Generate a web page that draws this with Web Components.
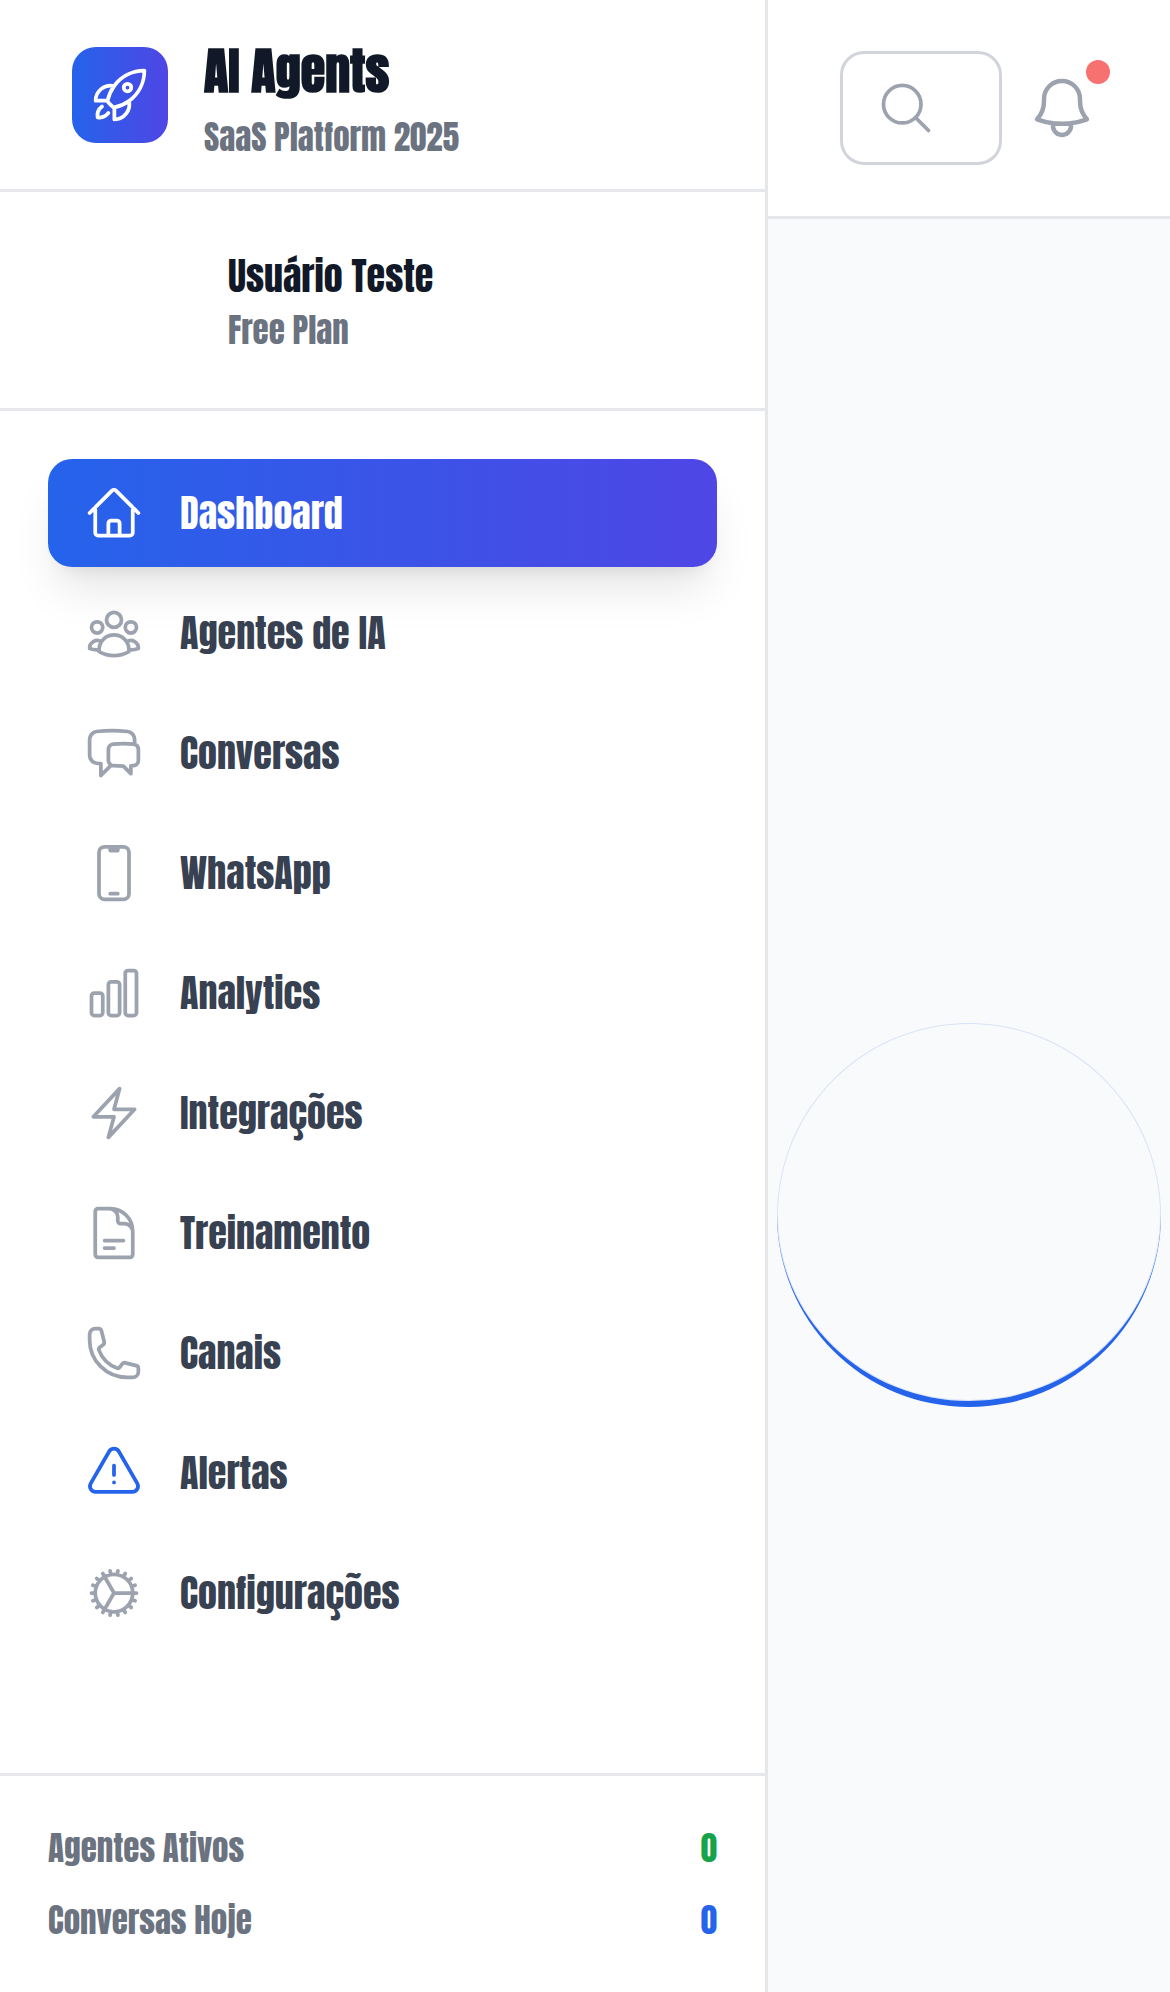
<!DOCTYPE html>
<html lang="pt-BR">
<head>
<meta charset="utf-8">
<meta name="viewport" content="width=device-width, initial-scale=1">
<title>AI Agents</title>
<style>
  body {
    margin: 0;
    background: #f9fafb;
    color: #111827;
    font-family: Anton, "Open Sans Condensed", Roboto, sans-serif;
    font-weight: 500;
    --line: #e5e7eb;
    --muted: #6b7280;
    --icon: #9ca3af;
    --blue: #2563eb;
    --brand: linear-gradient(to right, #2563eb, #4f46e5);
    --label: 38px;
    --small: 33px;
  }
</style>
</head>
<body>
<app-shell>
  <app-sidebar slot="sidebar">
    <app-brand slot="brand" name="AI Agents" tagline="SaaS Platform 2025"></app-brand>
    <user-card slot="user" name="Usuário Teste" plan="Free Plan"></user-card>
    <nav-item icon="home" active>Dashboard</nav-item>
    <nav-item icon="group">Agentes de IA</nav-item>
    <nav-item icon="chat">Conversas</nav-item>
    <nav-item icon="mobile">WhatsApp</nav-item>
    <nav-item icon="chart">Analytics</nav-item>
    <nav-item icon="bolt">Integrações</nav-item>
    <nav-item icon="document">Treinamento</nav-item>
    <nav-item icon="phone">Canais</nav-item>
    <nav-item icon="alert" style="--icon: var(--blue)">Alertas</nav-item>
    <nav-item icon="cog">Configurações</nav-item>
    <stat-row slot="stats" value="0" style="--value: #16a34a">Agentes Ativos</stat-row>
    <stat-row slot="stats" value="0" style="--value: var(--blue)">Conversas Hoje</stat-row>
  </app-sidebar>
  <app-topbar slot="topbar"></app-topbar>
  <loading-spinner></loading-spinner>
</app-shell>

<script>
const ICONS = {
  rocket: 'M15.59 14.37a6 6 0 01-5.84 7.38v-4.8m5.84-2.58a14.98 14.98 0 006.16-12.12A14.98 14.98 0 009.631 8.41m5.96 5.96a14.926 14.926 0 01-5.841 2.58m-.119-8.54a6 6 0 00-7.381 5.84h4.8m2.581-5.84a14.927 14.927 0 00-2.58 5.84m2.699 2.7c-.103.021-.207.041-.311.06a15.09 15.09 0 01-2.448-2.448 14.9 14.9 0 01.06-.312m-2.24 2.39a4.493 4.493 0 00-1.757 4.306 4.493 4.493 0 004.306-1.758M16.5 9a1.5 1.5 0 11-3 0 1.5 1.5 0 013 0z',
  home: 'M2.25 12l8.954-8.955c.44-.439 1.152-.439 1.591 0L21.75 12M4.5 9.75v10.125c0 .621.504 1.125 1.125 1.125H9.75v-4.875c0-.621.504-1.125 1.125-1.125h2.25c.621 0 1.125.504 1.125 1.125V21h4.125c.621 0 1.125-.504 1.125-1.125V9.75M8.25 21h8.25',
  group: 'M18 18.72a9.094 9.094 0 003.741-.479 3 3 0 00-4.682-2.72m.94 3.198l.001.031c0 .225-.012.447-.037.666A11.944 11.944 0 0112 21c-2.17 0-4.207-.576-5.963-1.584A6.062 6.062 0 016 18.719m12 0a5.971 5.971 0 00-.941-3.197m0 0A5.995 5.995 0 0012 12.75a5.995 5.995 0 00-5.058 2.772m0 0a3 3 0 00-4.681 2.72 8.986 8.986 0 003.74.477m.94-3.197a5.971 5.971 0 00-.94 3.197M15 6.75a3 3 0 11-6 0 3 3 0 016 0zm6 3a2.25 2.25 0 11-4.5 0 2.25 2.25 0 014.5 0zm-13.5 0a2.25 2.25 0 11-4.5 0 2.25 2.25 0 014.5 0z',
  chat: 'M20.25 8.511c.884.284 1.5 1.128 1.5 2.097v4.286c0 1.136-.847 2.1-1.98 2.193-.34.027-.68.052-1.02.072v3.091l-3-3c-1.354 0-2.694-.055-4.02-.163a2.115 2.115 0 01-.825-.242m9.345-8.334a2.126 2.126 0 00-.476-.095 48.64 48.64 0 00-8.048 0c-1.131.094-1.976 1.057-1.976 2.192v4.286c0 .837.46 1.58 1.155 1.951m9.345-8.334V6.637c0-1.621-1.152-3.026-2.76-3.235A48.455 48.455 0 0011.25 3c-2.115 0-4.198.137-6.24.402-1.608.209-2.76 1.614-2.76 3.235v6.226c0 1.621 1.152 3.026 2.76 3.235.577.075 1.157.14 1.74.194V21l4.155-4.155',
  mobile: 'M10.5 1.5H8.25A2.25 2.25 0 006 3.75v16.5a2.25 2.25 0 002.25 2.25h7.5A2.25 2.25 0 0018 20.25V3.75a2.25 2.25 0 00-2.25-2.25H13.5m-3 0V3h3V1.5m-3 0h3m-3 18.75h3',
  chart: 'M3 13.125C3 12.504 3.504 12 4.125 12h2.25c.621 0 1.125.504 1.125 1.125v6.75C7.5 20.496 6.996 21 6.375 21h-2.25A1.125 1.125 0 013 19.875v-6.75zM9.75 8.625c0-.621.504-1.125 1.125-1.125h2.25c.621 0 1.125.504 1.125 1.125v11.25c0 .621-.504 1.125-1.125 1.125h-2.25a1.125 1.125 0 01-1.125-1.125V8.625zM16.5 4.125c0-.621.504-1.125 1.125-1.125h2.25C20.496 3 21 3.504 21 4.125v15.75c0 .621-.504 1.125-1.125 1.125h-2.25a1.125 1.125 0 01-1.125-1.125V4.125z',
  bolt: 'M3.75 13.5l10.5-11.25L12 10.5h8.25L9.75 21.75 12 13.5H3.75z',
  document: 'M19.5 14.25v-2.625a3.375 3.375 0 00-3.375-3.375h-1.5A1.125 1.125 0 0113.5 7.125v-1.5a3.375 3.375 0 00-3.375-3.375H8.25m0 12.75h7.5m-7.5 3H12M10.5 2.25H5.625c-.621 0-1.125.504-1.125 1.125v17.25c0 .621.504 1.125 1.125 1.125h12.75c.621 0 1.125-.504 1.125-1.125V11.25a9 9 0 00-9-9z',
  phone: 'M2.25 6.75c0 8.284 6.716 15 15 15h2.25a2.25 2.25 0 002.25-2.25v-1.372c0-.516-.351-.966-.852-1.091l-4.423-1.106c-.44-.11-.902.055-1.173.417l-.97 1.293c-.282.376-.769.542-1.21.38a12.035 12.035 0 01-7.143-7.143c-.162-.441.004-.928.38-1.21l1.293-.97c.363-.271.527-.734.417-1.173L6.963 3.102a1.125 1.125 0 00-1.091-.852H4.5A2.25 2.25 0 002.25 4.5v2.25z',
  alert: 'M12 9v3.75m-9.303 3.376c-.866 1.5.217 3.374 1.948 3.374h14.71c1.73 0 2.813-1.874 1.948-3.374L13.949 3.378c-.866-1.5-3.032-1.5-3.898 0L2.697 16.126zM12 15.75h.007v.008H12v-.008z',
  cog: 'M4.5 12a7.5 7.5 0 0015 0m-15 0a7.5 7.5 0 1115 0m-15 0H3m16.5 0H21m-1.5 0H12m-8.457 3.077l1.41-.513m14.095-5.13l1.41-.513M5.106 17.785l1.15-.964m11.49-9.642l1.149-.964M7.501 19.795l.75-1.3m7.5-12.99l.75-1.3m-6.063 16.658l.26-1.477m2.605-14.772l.26-1.477m0 17.726l-.26-1.477M10.698 4.614l-.26-1.477M16.5 19.794l-.75-1.299M7.5 4.205L12 12m6.894 5.785l-1.149-.964M6.256 7.178l-1.15-.964m15.352 8.864l-1.41-.513M4.954 9.435l-1.41-.514M12.002 12l-3.75 6.495',
  search: 'M21 21l-5.197-5.197m0 0A7.5 7.5 0 105.196 5.196a7.5 7.5 0 0010.607 10.607z',
  bell: 'M14.857 17.082a23.848 23.848 0 005.454-1.31A8.967 8.967 0 0118 9.75v-.7V9A6 6 0 006 9v.75a8.967 8.967 0 01-2.312 6.022c1.733.64 3.56 1.085 5.455 1.31m5.714 0a24.255 24.255 0 01-5.714 0m5.714 0a3 3 0 11-5.714 0'
};

/* Registers an element whose shadow root is filled from the given markup. */
function element(tag, render) {
  customElements.define(tag, class extends HTMLElement {
    connectedCallback() {
      if (this.shadowRoot) return;
      this.attachShadow({ mode: 'open' }).innerHTML =
        '<style>*{box-sizing:border-box}:host{box-sizing:border-box}</style>' + render(this);
    }
  });
}

element('ui-icon', el => `
  <style>
    :host { display: block; flex: none; width: 60px; height: 60px; }
    svg { display: block; width: 100%; height: 100%; }
  </style>
  <svg viewBox="0 0 24 24" fill="none" stroke="currentColor" stroke-width="1.5"
       stroke-linecap="round" stroke-linejoin="round" aria-hidden="true">
    <path d="${ICONS[el.getAttribute('name')]}"/>
  </svg>`);

element('app-shell', () => `
  <style>
    :host { display: flex; height: 100vh; overflow: hidden; }
    .page { flex: 1; min-width: 0; display: flex; flex-direction: column; }
    main { flex: 1; min-height: 0; overflow: hidden; }
  </style>
  <slot name="sidebar"></slot>
  <div class="page">
    <slot name="topbar"></slot>
    <main><slot></slot></main>
  </div>`);

element('app-sidebar', () => `
  <style>
    :host {
      display: flex; flex-direction: column; flex: none; width: 768px;
      background: #fff; border-right: 3px solid var(--line);
    }
    nav { flex: 1; display: flex; flex-direction: column; gap: 12px; padding: 48px; }
    footer {
      display: flex; flex-direction: column; gap: 24px; padding: 48px;
      border-top: 3px solid var(--line);
    }
  </style>
  <slot name="brand"></slot>
  <slot name="user"></slot>
  <nav><slot></slot></nav>
  <footer><slot name="stats"></slot></footer>`);

element('app-brand', el => `
  <style>
    :host {
      display: flex; align-items: center; gap: 36px; height: 192px; padding: 0 72px;
      border-bottom: 3px solid var(--line);
    }
    .logo {
      display: grid; place-items: center; width: 96px; height: 96px;
      border-radius: 24px; background: var(--brand); color: #fff;
    }
    h1, p { margin: 0; }
    h1 { font-size: 50px; line-height: 84px; font-weight: 700; }
    p { font-size: var(--small); line-height: 48px; color: var(--muted); }
  </style>
  <div class="logo"><ui-icon name="rocket"></ui-icon></div>
  <div>
    <h1>${el.getAttribute('name')}</h1>
    <p>${el.getAttribute('tagline')}</p>
  </div>`);

element('user-card', el => `
  <style>
    :host {
      display: flex; align-items: center; gap: 36px; padding: 48px 72px;
      border-bottom: 3px solid var(--line);
    }
    .avatar { width: 120px; height: 120px; border-radius: 50%; }
    p { margin: 0; }
    .name { font-size: var(--label); line-height: 60px; }
    .plan { font-size: var(--small); line-height: 48px; color: var(--muted); }
  </style>
  <div class="avatar"></div>
  <div>
    <p class="name">${el.getAttribute('name')}</p>
    <p class="plan">${el.getAttribute('plan')}</p>
  </div>`);

element('nav-item', el => `
  <style>
    :host { display: block; }
    a {
      display: flex; align-items: center; gap: 36px; padding: 24px 36px;
      border-radius: 24px; color: #374151; text-decoration: none;
      font-size: var(--label); line-height: 60px;
    }
    ui-icon { color: var(--icon); }
    :host([active]) a {
      background: var(--brand); color: #fff;
      box-shadow: 0 30px 45px -9px rgba(0, 0, 0, .1), 0 12px 18px -12px rgba(0, 0, 0, .1);
    }
    :host([active]) ui-icon { color: #fff; }
  </style>
  <a href="#">
    <ui-icon name="${el.getAttribute('icon')}"></ui-icon>
    <span><slot></slot></span>
  </a>`);

element('stat-row', el => `
  <style>
    :host {
      display: flex; justify-content: space-between;
      font-size: var(--small); line-height: 48px; color: var(--muted);
    }
    .value { color: var(--value); }
  </style>
  <span><slot></slot></span>
  <span class="value">${el.getAttribute('value')}</span>`);

element('app-topbar', () => `
  <style>
    :host {
      display: flex; align-items: center; gap: 12px; flex: none; height: 219px;
      padding: 0 60px 0 72px; background: #fff; border-bottom: 3px solid var(--line);
    }
    label {
      flex: 1; min-width: 0; display: flex; align-items: center; height: 114px;
      padding: 0 33px; border: 3px solid #d1d5db; border-radius: 24px; color: var(--icon);
    }
    input {
      flex: 1; min-width: 0; width: 0; padding: 0; border: 0; outline: 0;
      background: none; font: inherit; font-size: var(--label);
    }
    button {
      position: relative; flex: none; padding: 12px; border: 0;
      background: none; color: var(--icon);
    }
    button ui-icon { width: 72px; height: 72px; }
    .badge {
      position: absolute; top: 0; right: 0; width: 24px; height: 24px;
      border-radius: 50%; background: #f87171;
    }
  </style>
  <label><ui-icon name="search"></ui-icon><input type="text" aria-label="Buscar"></label>
  <button type="button" aria-label="Notificações">
    <ui-icon name="bell"></ui-icon><span class="badge"></span>
  </button>`);

element('loading-spinner', () => `
  <style>
    :host { display: flex; align-items: center; justify-content: center; height: 100vh; }
    div {
      width: 384px; height: 384px; border-radius: 50%;
      border-bottom: 6px solid var(--blue);
      box-shadow: inset 0 0 0 1px rgba(37, 99, 235, .15);
    }
  </style>
  <div role="status" aria-label="Carregando"></div>`);
</script>
</body>
</html>
